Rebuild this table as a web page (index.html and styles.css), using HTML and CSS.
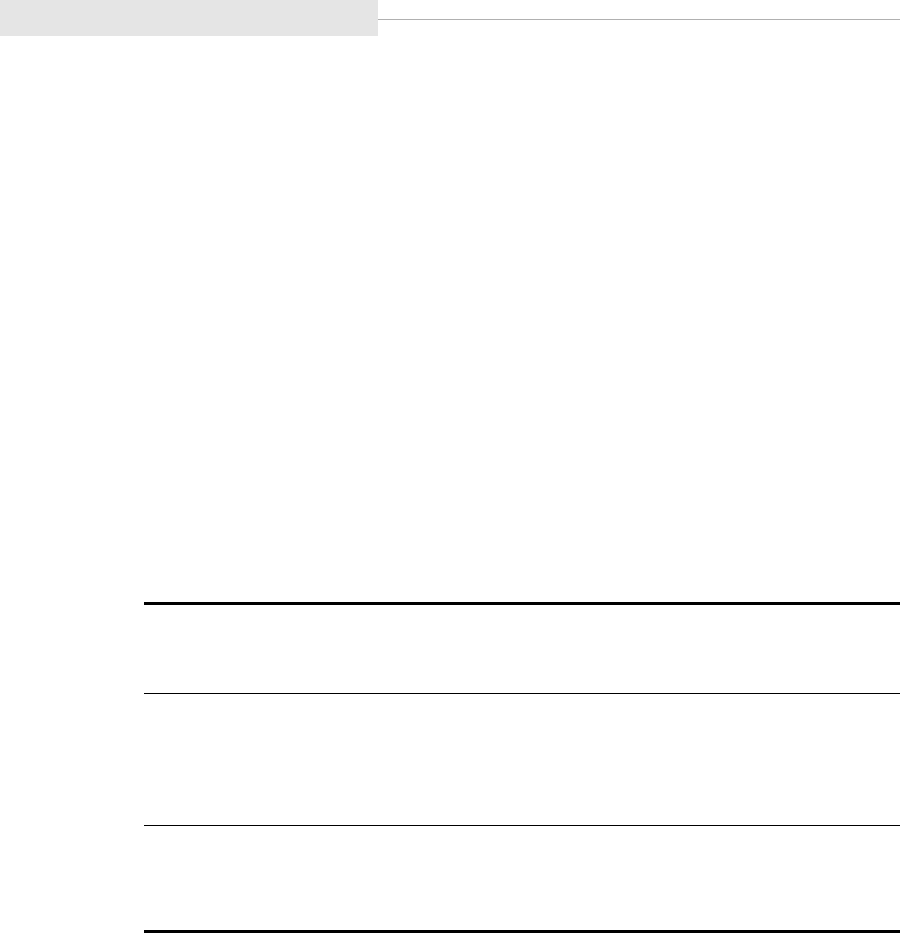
FILE: index.html
```html
<!DOCTYPE html>
<html lang="en">
<head>
    <meta charset="UTF-8">
    <meta name="viewport" content="width=device-width, initial-scale=1.0">
    <link rel="stylesheet" href="styles.css">
    <title>Table</title>
</head>
<body>
    <div class="topbar">
        <div class="tab"></div>
        <div class="rule"></div>
    </div>

    <div class="content">
        <div class="table">
            <div class="row head"></div>
            <div class="row mid"></div>
            <div class="row last"></div>
        </div>
    </div>
</body>
</html>
```

FILE: styles.css
```css
* {
    box-sizing: border-box;
}

body {
    margin: 0;
    font-family: "Liberation Sans", Arial, sans-serif;
    background: #ffffff;
    width: 900px;
    height: 933px;
    overflow: hidden;
}

.topbar {
    display: flex;
    height: 36px;
}

.tab {
    width: 378px;
    height: 36px;
    background: #e5e5e5;
}

.rule {
    flex: 1;
    margin-top: 19px;
    height: 1px;
    background: #b0b0b0;
}

.content {
    padding-top: 566px;
    padding-left: 144px;
}

.table {
    width: 756px;
    border-top: 3px solid #000;
    border-bottom: 3px solid #000;
}

.row {
    border-bottom: 1px solid #000;
}

.row.head {
    height: 89px;
}

.row.mid {
    height: 132px;
}

.row.last {
    height: 104px;
    border-bottom: none;
}
```
